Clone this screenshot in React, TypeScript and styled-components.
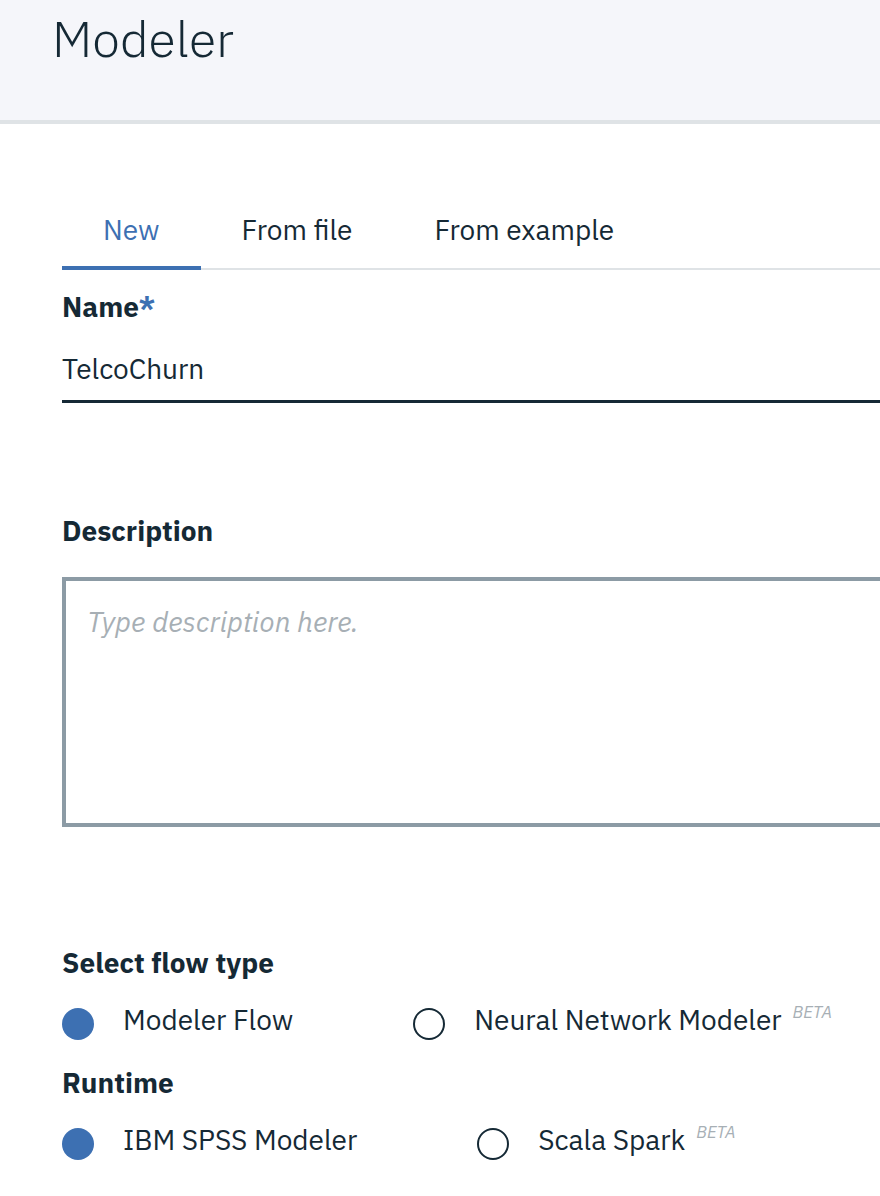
import React from 'react';
import styled, { createGlobalStyle } from 'styled-components';

const GlobalStyle = createGlobalStyle`
	body {
		margin: 0;
		background: #ffffff;
		font-family: "IBM Plex Sans", Roboto, "Liberation Sans", sans-serif;
		color: #152935;
		overflow-x: hidden;
	}
`;

export const Header = styled.header`
	height: 120px;
	background-color: #f5f6fa;
	border-bottom: 4px solid #dfe3e6;
	padding-left: 52px;
	box-sizing: content-box;
`;

export const Title = styled.h1`
	margin: 0;
	padding-top: 9px;
	font-size: 50px;
	line-height: 60px;
	font-weight: 300;
	color: #152935;
`;

export const Content = styled.main`
	padding: 88px 0 40px 62px;
	overflow: hidden;
`;

export const TabList = styled.div`
	display: flex;
	border-bottom: 2px solid #dfe3e6;
`;

export const Tab = styled.button<{ active?: boolean }>`
	background: none;
	border: none;
	border-bottom: 4px solid ${p => (p.active ? '#3d70b2' : 'transparent')};
	margin-bottom: -2px;
	padding: 0 41px 18px;
	font-family: inherit;
	font-size: 28px;
	line-height: 36px;
	color: ${p => (p.active ? '#3d70b2' : '#152935')};
	cursor: pointer;
`;

export const Label = styled.div<{ gap: number }>`
	margin-top: ${p => p.gap}px;
	font-size: 28px;
	line-height: 36px;
	font-weight: 700;
	color: #152935;

	span {
		color: #3d70b2;
	}
`;

export const TextInput = styled.div`
	margin-top: 26px;
	width: calc(100% + 40px);
	font-size: 28px;
	line-height: 36px;
	padding-bottom: 13px;
	border-bottom: 3px solid #152935;
`;

export const TextArea = styled.div`
	margin-top: 28px;
	width: calc(100% + 40px);
	height: 250px;
	box-sizing: border-box;
	border: 4px solid #8c9ba5;
	padding: 23px 21px;
	font-size: 28px;
	line-height: 36px;
	font-style: italic;
	color: #a7afb5;
`;

export const RadioRow = styled.div`
	display: flex;
	align-items: center;
	gap: 120px;
	margin-top: 21px;
	height: 36px;
`;

export const RadioItem = styled.label`
	display: flex;
	align-items: center;
	font-size: 28px;
	line-height: 36px;
	color: #152935;
`;

export const Circle = styled.span<{ checked?: boolean }>`
	width: 32px;
	height: 32px;
	box-sizing: border-box;
	border-radius: 50%;
	margin: 8px 29px 0 0;
	background: ${p => (p.checked ? '#3d70b2' : '#ffffff')};
	border: ${p => (p.checked ? 'none' : '2px solid #152935')};
	flex-shrink: 0;
`;

export const Beta = styled.sup`
	align-self: flex-start;
	margin-left: 11px;
	margin-top: 2px;
	font-size: 17px;
	line-height: 20px;
	font-style: italic;
	color: #a7afb5;
`;

const Radio = ({ label, checked, beta }: { label: string; checked?: boolean; beta?: boolean }) => (
	<RadioItem>
		<Circle checked={checked} />
		{label}
		{beta && <Beta>BETA</Beta>}
	</RadioItem>
);

export default function App() {
	return (
		<>
			<GlobalStyle />
			<Header>
				<Title>Modeler</Title>
			</Header>
			<Content>
				<TabList>
					<Tab active>New</Tab>
					<Tab>From file</Tab>
					<Tab>From example</Tab>
				</TabList>
				<Label gap={19}>
					Name<span>*</span>
				</Label>
				<TextInput>TelcoChurn</TextInput>
				<Label gap={110}>Description</Label>
				<TextArea>Type description here.</TextArea>
				<Label gap={118}>Select flow type</Label>
				<RadioRow>
					<Radio label="Modeler Flow" checked />
					<Radio label="Neural Network Modeler" beta />
				</RadioRow>
				<Label gap={27}>Runtime</Label>
				<RadioRow>
					<Radio label="IBM SPSS Modeler" checked />
					<Radio label="Scala Spark" beta />
				</RadioRow>
			</Content>
		</>
	);
}
